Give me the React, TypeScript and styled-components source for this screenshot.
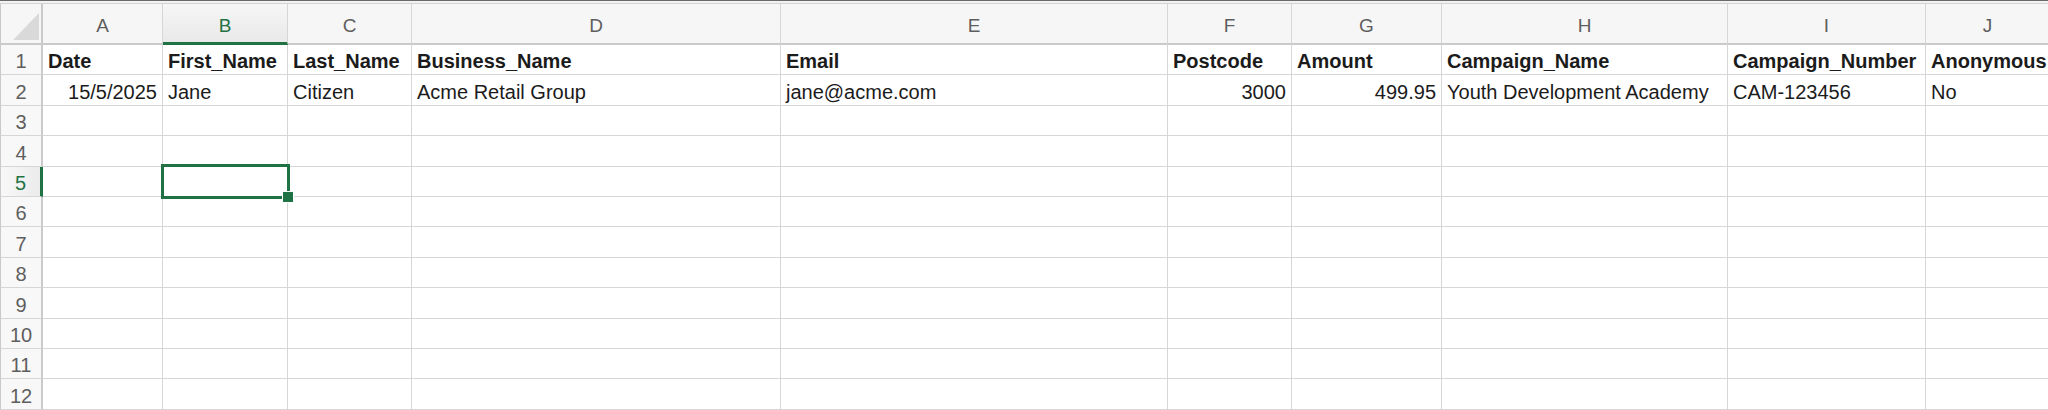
import React from 'react';
import styled, { createGlobalStyle, css } from 'styled-components';

const GlobalStyle = createGlobalStyle`
  html, body {
    margin: 0;
    padding: 0;
    background: #ffffff;
    overflow: hidden;
  }
  * {
    box-sizing: border-box;
  }
`;

const GREEN = '#1f7244';
const GRID = '#d6d6d6';
const HEAD_LINE = '#cacaca';

const Window = styled.div`
  width: 2048px;
  height: 410px;
  overflow: hidden;
  background: #ffffff;
  font-family: 'Liberation Sans', Arial, sans-serif;
`;

const TopEdge = styled.div`
  height: 4px;
  border-top: 1px solid #6a6a6a;
  border-bottom: 1px solid #d2d2d2;
  background: #f2f2f2;
`;

const Sheet = styled.div`
  display: grid;
  grid-template-columns: 43px 120px 125px 124px 369px 387px 124px 150px 286px 198px 124px;
  grid-template-rows: 41px;
  grid-auto-rows: 30.4px;
`;

const Corner = styled.div`
  position: relative;
  background: #f6f6f6;
  border-left: 1px solid #c9c9c9;
  border-right: 2px solid ${HEAD_LINE};
  border-bottom: 2px solid ${HEAD_LINE};

  svg {
    position: absolute;
    left: 12px;
    top: 9px;
  }
`;

const ColHeader = styled.div<{ $selected?: boolean }>`
  display: flex;
  align-items: center;
  justify-content: center;
  padding-top: 5px;
  background: #f6f6f6;
  border-right: 1px solid ${GRID};
  border-bottom: 2px solid ${HEAD_LINE};
  font-size: 19px;
  color: #5e5e5e;
  ${p =>
    p.$selected &&
    css`
      background: linear-gradient(#f6f6f6, #e9e9e9);
      color: ${GREEN};
      border-bottom-color: ${GREEN};
      border-bottom-width: 3px;
    `}
`;

const RowHeader = styled.div<{ $selected?: boolean }>`
  display: flex;
  align-items: flex-end;
  justify-content: center;
  padding-bottom: 1px;
  background: #f8f8f8;
  border-left: 1px solid #c9c9c9;
  border-right: 2px solid ${HEAD_LINE};
  border-bottom: 1px solid ${GRID};
  font-size: 20px;
  color: #5e5e5e;
  ${p =>
    p.$selected &&
    css`
      background: linear-gradient(90deg, #f8f8f8, #ebebeb);
      color: ${GREEN};
      border-right: 3px solid ${GREEN};
    `}
`;

const Cell = styled.div<{ $right?: boolean; $bold?: boolean }>`
  position: relative;
  display: flex;
  align-items: flex-end;
  justify-content: ${p => (p.$right ? 'flex-end' : 'flex-start')};
  padding: 0 5px 1px 5px;
  border-right: 1px solid ${GRID};
  border-bottom: 1px solid ${GRID};
  font-size: 20px;
  font-weight: ${p => (p.$bold ? 700 : 400)};
  color: #1b1b1b;
  white-space: nowrap;
`;

const SelectionBox = styled.div`
  position: absolute;
  z-index: 2;
  left: -2px;
  top: -3px;
  right: -3px;
  bottom: -3px;
  border: 3px solid ${GREEN};
  pointer-events: none;
`;

const FillHandle = styled.div`
  position: absolute;
  right: -7px;
  bottom: -7px;
  width: 12px;
  height: 12px;
  background: ${GREEN};
  border: 1px solid #ffffff;
`;

const columns = ['A', 'B', 'C', 'D', 'E', 'F', 'G', 'H', 'I', 'J'];

type CellData = { text: string; right?: boolean };

const headerRow: CellData[] = [
  { text: 'Date' },
  { text: 'First_Name' },
  { text: 'Last_Name' },
  { text: 'Business_Name' },
  { text: 'Email' },
  { text: 'Postcode' },
  { text: 'Amount' },
  { text: 'Campaign_Name' },
  { text: 'Campaign_Number' },
  { text: 'Anonymous' },
];

const dataRow: CellData[] = [
  { text: '15/5/2025', right: true },
  { text: 'Jane' },
  { text: 'Citizen' },
  { text: 'Acme Retail Group' },
  { text: 'jane@acme.com' },
  { text: '3000', right: true },
  { text: '499.95', right: true },
  { text: 'Youth Development Academy' },
  { text: 'CAM-123456' },
  { text: 'No' },
];

const SELECTED_COL = 1;
const SELECTED_ROW = 5;

const CornerTriangle = () => (
  <svg width="27" height="28" viewBox="0 0 27 28">
    <polygon points="26,0 26,27 0,27" fill="#d9d9d9" />
  </svg>
);

const App: React.FC = () => {
  const rows = Array.from({ length: 12 }, (_, i) => i + 1);

  const rowData = (r: number): CellData[] => {
    if (r === 1) return headerRow;
    if (r === 2) return dataRow;
    return columns.map(() => ({ text: '' }));
  };

  return (
    <Window>
      <GlobalStyle />
      <TopEdge />
      <Sheet>
        <Corner>
          <CornerTriangle />
        </Corner>
        {columns.map((c, i) => (
          <ColHeader key={c} $selected={i === SELECTED_COL}>
            {c}
          </ColHeader>
        ))}
        {rows.map(r => (
          <React.Fragment key={r}>
            <RowHeader $selected={r === SELECTED_ROW}>{r}</RowHeader>
            {rowData(r).map((cell, ci) => {
              const selected = r === SELECTED_ROW && ci === SELECTED_COL;
              return (
                <Cell key={ci} $right={cell.right} $bold={r === 1}>
                  {cell.text}
                  {selected && (
                    <SelectionBox>
                      <FillHandle />
                    </SelectionBox>
                  )}
                </Cell>
              );
            })}
          </React.Fragment>
        ))}
      </Sheet>
    </Window>
  );
};

export default App;
